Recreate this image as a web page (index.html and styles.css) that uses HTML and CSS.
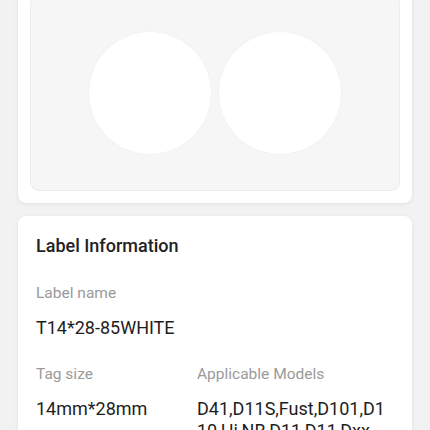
FILE: index.html
```html
<!DOCTYPE html>
<html lang="en">
<head>
    <meta charset="UTF-8">
    <meta name="viewport" content="width=device-width, initial-scale=1.0">
    <title>Label Information</title>
    <link rel="stylesheet" href="styles.css">
</head>
<body>
    <div class="page">
        <div class="card preview-card">
            <div class="preview">
                <div class="circle"></div>
                <div class="circle"></div>
            </div>
        </div>

        <div class="card info-card">
            <h2 class="info-title">Label Information</h2>
            <div class="field">
                <div class="field-label">Label name</div>
                <div class="field-value">T14*28-85WHITE</div>
            </div>
            <div class="field-row">
                <div class="field">
                    <div class="field-label">Tag size</div>
                    <div class="field-value">14mm*28mm</div>
                </div>
                <div class="field">
                    <div class="field-label">Applicable Models</div>
                    <div class="field-value models">D41,D11S,Fust,D101,D110,Hi,NB,D11,D11,Dxx</div>
                </div>
            </div>
        </div>
    </div>
</body>
</html>
```

FILE: styles.css
```css
body {
    margin: 0;
    padding: 0;
    background-color: #f2f2f2;
    font-family: Roboto, "Noto Sans", sans-serif;
    color: #222;
    overflow: hidden;
}
.page {
    padding: 0 18px;
    margin-top: -17px;
}
.card {
    background-color: #fff;
    border-radius: 8px;
    box-shadow: 0 1px 4px rgba(0, 0, 0, 0.08);
}
.preview-card {
    padding: 12px;
}
.preview {
    height: 196px;
    background-color: #f6f6f6;
    border: 1px solid #ececec;
    border-radius: 9px;
    box-sizing: border-box;
    display: flex;
    justify-content: center;
    align-items: center;
    gap: 8px;
}
.circle {
    width: 122px;
    height: 122px;
    border-radius: 50%;
    background-color: #fff;
    box-shadow: 0 0 2px rgba(0, 0, 0, 0.05);
}
.info-card {
    margin-top: 13px;
    padding: 18px 18px 20px;
}
.info-title {
    margin: 0 0 25px;
    font-size: 18px;
    font-weight: 500;
    line-height: 24px;
}
.field-label {
    font-size: 15.5px;
    line-height: 20px;
    color: #9a9a9a;
}
.field-value {
    margin-top: 14px;
    font-size: 18px;
    line-height: 22px;
    color: #1e1e1e;
}
.field + .field-row {
    margin-top: 25px;
}
.field-row {
    display: grid;
    grid-template-columns: 161px 1fr;
}
.models {
    word-break: break-all;
}
```
